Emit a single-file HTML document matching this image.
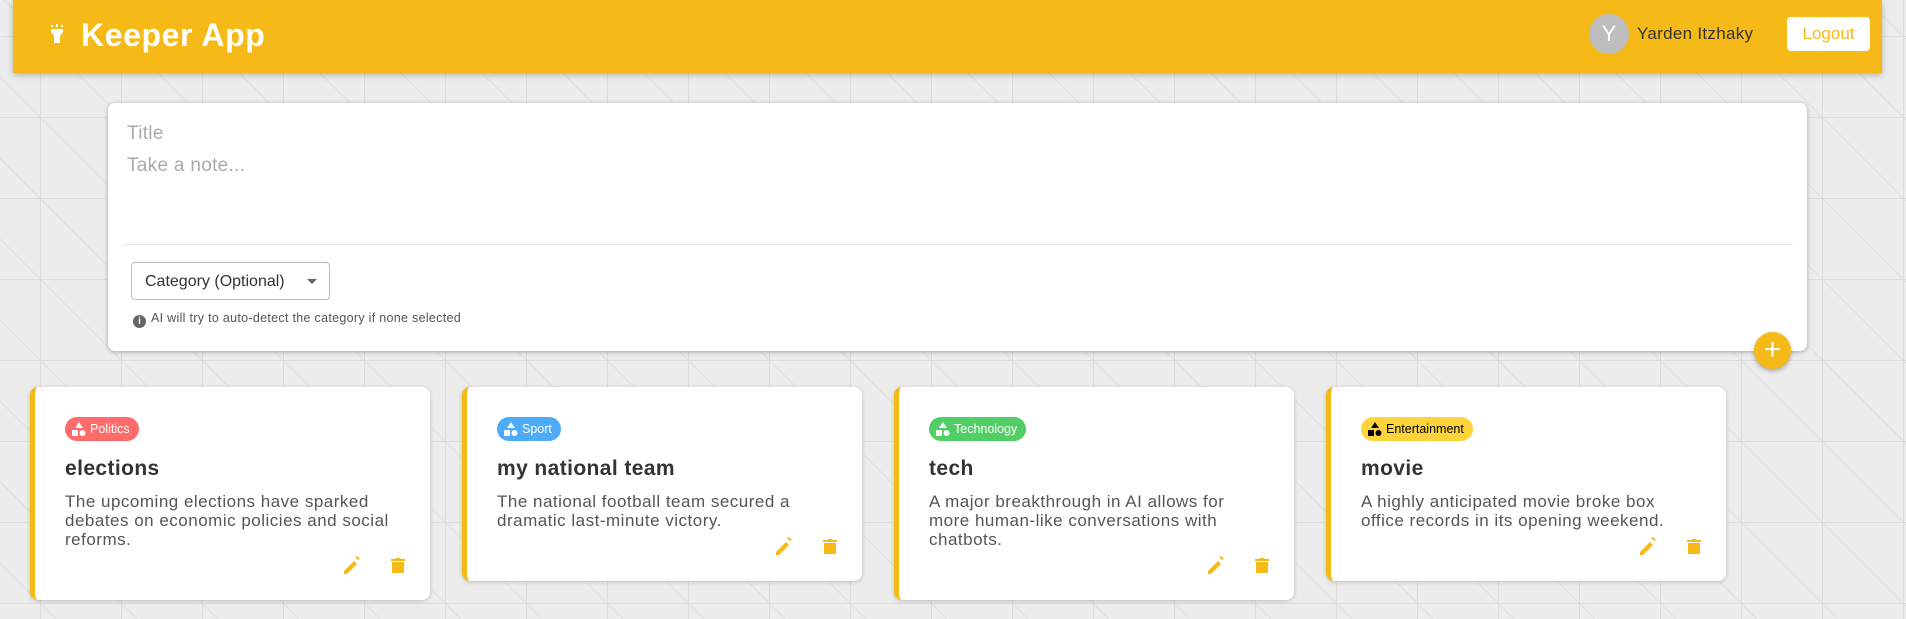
<!DOCTYPE html>
<html><head><meta charset="utf-8"><style>
*{margin:0;padding:0;box-sizing:border-box}
body{width:1906px;height:619px;overflow:hidden;font-family:"Liberation Sans",sans-serif;background-color:#ececec;position:relative;
background-image:
linear-gradient(to right,#dcdcdc 1px,transparent 1px),
linear-gradient(to bottom,#dcdcdc 1px,transparent 1px),
linear-gradient(45deg,transparent 49.4%,#e0e0e0 49.4%,#e0e0e0 50.6%,transparent 50.6%);
background-size:81px 81px,81px 81px,81px 81px;
background-position:40px 36px,40px 36px,40px 36px;}
.hdr{position:absolute;left:13px;top:0;width:1869px;height:73px;background:#f5ba18;box-shadow:0 2px 6px rgba(0,0,0,.25)}
.logo{position:absolute;left:68px;top:17px;color:#fff;font-size:32px;font-weight:bold;letter-spacing:0.6px}
.av{position:absolute;left:1576px;top:14px;width:40px;height:40px;border-radius:50%;background:#bdbdbd;color:#fff;font-size:22px;text-align:center;line-height:40px}
.nm{position:absolute;left:1624px;top:24px;font-size:17px;color:#333;letter-spacing:0.3px}
.lo{position:absolute;left:1774px;top:17px;width:83px;height:34px;background:#fff;border-radius:4px;color:#f5ba18;font-size:17px;text-align:center;line-height:34px}
.form{position:absolute;left:108px;top:103px;width:1699px;height:248px;background:#fff;border-radius:7px;box-shadow:0 1px 5px rgba(0,0,0,.3)}
.ph{position:absolute;left:19px;color:#aaa;font-size:19px;letter-spacing:0.3px}
.div{position:absolute;left:15px;right:14px;top:141px;height:1px;background:#e6e6e6}
.sel{position:absolute;left:23px;top:159px;width:199px;height:38px;border:1px solid #bbb;border-radius:4px;font-size:16px;color:#333;padding:10px 0 0 13px}
.sel:after{content:"";position:absolute;right:12px;top:16px;border:5px solid transparent;border-top-color:#666}
.info{position:absolute;left:25px;top:208px;font-size:12.5px;color:#555;letter-spacing:0.3px}
.info b{display:inline-block;width:13px;height:13px;border-radius:50%;background:#666;color:#fff;font-size:10px;text-align:center;line-height:13px;margin-right:5px;vertical-align:-2px;letter-spacing:0}
.plus{position:absolute;left:1754px;top:332px;width:37px;height:37px;border-radius:50%;background:#f5ba18;box-shadow:0 2px 4px rgba(0,0,0,.3);color:#fff;font-size:30px;text-align:center;line-height:35px}
.card{position:absolute;top:387px;width:400px;background:#fff;border-radius:8px;border-left:5px solid #f5ba18;box-shadow:0 1px 4px rgba(0,0,0,.2)}
.badge{position:absolute;left:30px;top:30px;height:24px;border-radius:12px;color:#fff;font-size:12.5px;line-height:24px;padding:0 9px 0 25px}
.badge svg{position:absolute;left:7px;top:5px}
.t{position:absolute;left:30px;top:70px;font-size:21px;font-weight:bold;color:#333;letter-spacing:0.4px}
.b{position:absolute;left:30px;top:105px;font-size:17px;line-height:19px;color:#555;letter-spacing:0.5px;white-space:nowrap}
.ic{position:absolute;right:24px;bottom:26px;width:62px;height:18px}
</style></head><body>
<div class="hdr">
<svg style="position:absolute;left:37px;top:24px" width="14" height="20" viewBox="0 0 14 20"><rect x="6" y="0" width="2" height="3" fill="#fff"/><rect x="1" y="1" width="2" height="2" fill="#fff"/><rect x="11" y="1" width="2" height="2" fill="#fff"/><path d="M1 5h12v3l-3 4v7H4v-7L1 8z" fill="#fff"/></svg>
<div class="logo">Keeper App</div>
<div class="av">Y</div><div class="nm">Yarden Itzhaky</div><div class="lo">Logout</div>
</div>
<div class="form">
<div class="ph" style="top:20px">Title</div>
<div class="ph" style="top:52px">Take a note...</div>
<div class="div"></div>
<div class="sel">Category (Optional)</div>
<div class="info"><b>i</b>AI will try to auto-detect the category if none selected</div>
</div>
<div class="plus">+</div>

<div class="card" style="left:30px;height:213px">
<div class="badge" style="background:#ff6b6b"><svg width="14" height="14" viewBox="0 0 14 14"><path d="M7 0l4 6H3z" fill="#fff"/><rect x="0" y="8" width="6" height="6" fill="#fff"/><circle cx="10.5" cy="11" r="3" fill="#fff"/></svg>Politics</div>
<div class="t">elections</div>
<div class="b">The upcoming elections have sparked<br>debates on economic policies and social<br>reforms.</div>
<svg class="ic" viewBox="0 0 62 18"><path d="M0 15v3h3l10-10-3-3z M14 4l-3-3 2-1 3 3z" fill="#f5ba18"/><path d="M47 3h4l1-1h4l1 1h4v2H47z M48 6h12v11H48z" fill="#f5ba18"/></svg>
</div>
<div class="card" style="left:462px;height:194px">
<div class="badge" style="background:#4dabf7"><svg width="14" height="14" viewBox="0 0 14 14"><path d="M7 0l4 6H3z" fill="#fff"/><rect x="0" y="8" width="6" height="6" fill="#fff"/><circle cx="10.5" cy="11" r="3" fill="#fff"/></svg>Sport</div>
<div class="t">my national team</div>
<div class="b">The national football team secured a<br>dramatic last-minute victory.</div>
<svg class="ic" viewBox="0 0 62 18"><path d="M0 15v3h3l10-10-3-3z M14 4l-3-3 2-1 3 3z" fill="#f5ba18"/><path d="M47 3h4l1-1h4l1 1h4v2H47z M48 6h12v11H48z" fill="#f5ba18"/></svg>
</div>
<div class="card" style="left:894px;height:213px">
<div class="badge" style="background:#51cf66"><svg width="14" height="14" viewBox="0 0 14 14"><path d="M7 0l4 6H3z" fill="#fff"/><rect x="0" y="8" width="6" height="6" fill="#fff"/><circle cx="10.5" cy="11" r="3" fill="#fff"/></svg>Technology</div>
<div class="t">tech</div>
<div class="b">A major breakthrough in AI allows for<br>more human-like conversations with<br>chatbots.</div>
<svg class="ic" viewBox="0 0 62 18"><path d="M0 15v3h3l10-10-3-3z M14 4l-3-3 2-1 3 3z" fill="#f5ba18"/><path d="M47 3h4l1-1h4l1 1h4v2H47z M48 6h12v11H48z" fill="#f5ba18"/></svg>
</div>
<div class="card" style="left:1326px;height:194px">
<div class="badge" style="background:#ffd43b;color:#000"><svg width="14" height="14" viewBox="0 0 14 14"><path d="M7 0l4 6H3z" fill="#000"/><rect x="0" y="8" width="6" height="6" fill="#000"/><circle cx="10.5" cy="11" r="3" fill="#000"/></svg>Entertainment</div>
<div class="t">movie</div>
<div class="b">A highly anticipated movie broke box<br>office records in its opening weekend.</div>
<svg class="ic" viewBox="0 0 62 18"><path d="M0 15v3h3l10-10-3-3z M14 4l-3-3 2-1 3 3z" fill="#f5ba18"/><path d="M47 3h4l1-1h4l1 1h4v2H47z M48 6h12v11H48z" fill="#f5ba18"/></svg>
</div>
</body></html>
